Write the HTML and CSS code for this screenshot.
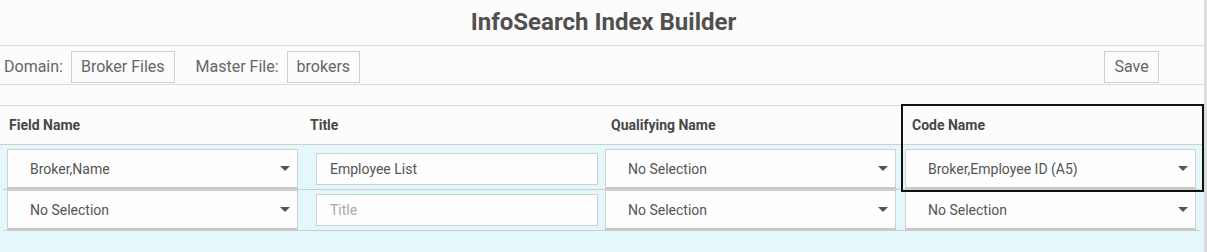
FILE: index.html
```html
<!DOCTYPE html>
<html>
<head>
<meta charset="utf-8">
<link rel="stylesheet" href="styles.css">
</head>
<body>
<div class="page">
  <h1 class="title">InfoSearch Index Builder</h1>
  <div class="toolbar">
    <span class="label">Domain:</span>
    <span class="box">Broker Files</span>
    <span class="label master">Master File:</span>
    <span class="box">brokers</span>
    <span class="grow"></span>
    <button class="box save">Save</button>
  </div>
  <div class="spacer"></div>
  <div class="table">
    <div class="head">
      <div class="th">Field Name</div>
      <div class="th">Title</div>
      <div class="th">Qualifying Name</div>
      <div class="th">Code Name</div>
    </div>
    <div class="body">
      <div class="row first">
        <div class="sel"><span>Broker,Name</span><i class="caret"></i></div>
        <div class="inp">Employee List</div>
        <div class="sel"><span>No Selection</span><i class="caret"></i></div>
        <div class="sel"><span>Broker,Employee ID (A5)</span><i class="caret"></i></div>
      </div>
      <div class="row">
        <div class="sel"><span>No Selection</span><i class="caret"></i></div>
        <div class="inp ph">Title</div>
        <div class="sel"><span>No Selection</span><i class="caret"></i></div>
        <div class="sel"><span>No Selection</span><i class="caret"></i></div>
      </div>
    </div>
    <div class="focus"></div>
  </div>
</div>
</body>
</html>
```
FILE: styles.css
```css
html, body {
  margin: 0;
  padding: 0;
  height: 100%;
}
body {
  background: #fbfcfb;
  font-family: Roboto, "Liberation Sans", sans-serif;
  color: #555;
  overflow: hidden;
}
.page {
  width: 1204px;
  height: 252px;
  border-right: 3px solid #dcdcdc;
  display: flex;
  flex-direction: column;
  position: relative;
}
.title {
  margin: 0;
  height: 46px;
  box-sizing: border-box;
  padding-top: 8px;
  text-align: center;
  font-size: 24px;
  font-weight: 700;
  color: #505050;
  line-height: 28px;
  border-bottom: 1px solid #dcdcdc;
  padding-left: 3px;
}
.toolbar {
  height: 39px;
  box-sizing: border-box;
  border-bottom: 1px solid #dcdcdc;
  display: flex;
  align-items: flex-start;
  padding: 5px 0 0 4px;
}
.label {
  font-size: 16px;
  color: #666;
  line-height: 32px;
  margin-right: 8px;
}
.master {
  margin-left: 21px;
  margin-right: 8px;
}
.box {
  font-family: Roboto, "Liberation Sans", sans-serif;
  font-size: 16px;
  color: #666;
  height: 32px;
  box-sizing: border-box;
  border: 1px solid #cfcfcf;
  background: transparent;
  padding: 0 9px;
  line-height: 30px;
}
.grow { flex: 1; }
.save {
  margin-right: 45px;
  width: 55px;
  padding: 0;
  text-align: center;
}
.spacer {
  height: 21px;
  box-sizing: border-box;
  border-bottom: 1px solid #dcdcdc;
}
.table {
  flex: 1;
  display: flex;
  flex-direction: column;
}
.head {
  height: 39px;
  box-sizing: border-box;
  border-bottom: 1px solid #cfcfcf;
  display: grid;
  grid-template-columns: 301px 301px 301px 301px;
  padding-left: 2px;
}
.th {
  font-size: 14px;
  font-weight: 700;
  color: #474747;
  line-height: 38px;
  padding-left: 7px;
}
.body {
  flex: 1;
  background: #e4f8fc;
}
.row {
  margin: 0 4px 0 3px;
  padding-left: 4px;
  display: grid;
  grid-template-columns: 309px 289px 300px 291px;
  align-items: center;
  border-bottom: 1px solid #cdcdcd;
}
.row.first { padding-top: 4px; }
.sel {
  width: 291px;
  height: 40px;
  box-sizing: border-box;
  background: #fdfefd;
  border: 1px solid #d0d0d0;
  border-bottom: 2px solid #c9c9c9;
  display: flex;
  align-items: center;
  justify-content: space-between;
  padding: 0 7px 0 22px;
  font-size: 14px;
  color: #555;
}
.caret {
  width: 0;
  height: 0;
  border-left: 5px solid transparent;
  border-right: 5px solid transparent;
  border-top: 5px solid #555;
}
.inp {
  width: 282px;
  height: 32px;
  box-sizing: border-box;
  background: #fdfefd;
  border: 1px solid #d0d0d0;
  padding-left: 13px;
  line-height: 30px;
  font-size: 14px;
  color: #555;
}
.inp.ph { color: #aaa; }
.focus {
  position: absolute;
  left: 901px;
  top: 104px;
  width: 299px;
  height: 84px;
  border: 2px solid #111;
  pointer-events: none;
}
```
